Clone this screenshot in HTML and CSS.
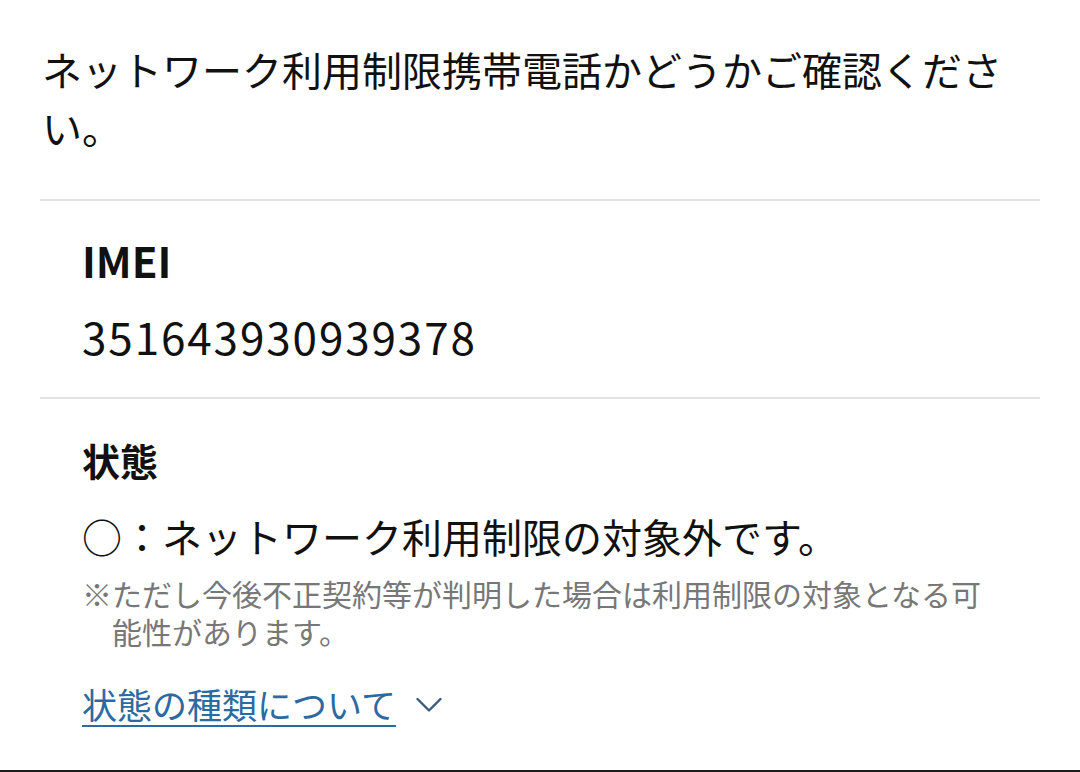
FILE: index.html
```html
<!DOCTYPE html>
<html lang="ja">
<head>
<meta charset="utf-8">
<link rel="stylesheet" href="styles.css">
</head>
<body>
<div class="page">
  <p class="intro">ネットワーク利用制限携帯電話かどうかご確認ください。</p>
  <section class="item item-imei">
    <h2 class="label label-latin">IMEI</h2>
    <p class="value digits">351643930939378</p>
  </section>
  <section class="item item-status">
    <h2 class="label">状態</h2>
    <p class="value">○：ネットワーク利用制限の対象外です。</p>
    <p class="note">※ただし今後不正契約等が判明した場合は利用制限の対象となる可能性があります。</p>
    <a class="toggle" href="#"><span class="toggle-text">状態の種類について</span><svg class="chev" width="26" height="16" viewBox="0 0 26 16"><polyline points="1.5,2 13,13.5 24.5,2" fill="none" stroke="#3d5b7c" stroke-width="2.4" stroke-linecap="round" stroke-linejoin="round"/></svg></a>
  </section>
</div>
</body>
</html>
```
FILE: styles.css
```css
html, body {
  margin: 0;
  padding: 0;
  background: #ffffff;
}
body {
  font-family: "Noto Sans CJK JP", "Noto Sans", sans-serif;
  color: #111111;
}
.page {
  box-sizing: border-box;
  height: 772px;
  padding: 0 40px;
  border-bottom: 2px solid #1c1c1c;
  display: flex;
  flex-direction: column;
}
.intro {
  margin: 0;
  padding: 40px 0 43px 2px;
  font-size: 40px;
  line-height: 58px;
  border-bottom: 2px solid #e3e3e3;
}
.item {
  padding: 0 42px;
  display: flex;
  flex-direction: column;
  align-items: flex-start;
}
.item-imei {
  padding-top: 34px;
  padding-bottom: 36px;
  border-bottom: 2px solid #e3e3e3;
}
.item-status {
  padding-top: 36px;
}
.label {
  margin: 0;
  font-size: 38px;
  line-height: 50px;
  font-weight: 700;
}
.label-latin {
  font-size: 42px;
  letter-spacing: 0;
}
.value {
  margin: 26px 0 0;
  font-size: 40px;
  line-height: 50px;
  font-weight: 400;
}
.digits {
  font-size: 44px;
  letter-spacing: 1.9px;
}
.note {
  margin: 13px 0 0;
  font-size: 30px;
  line-height: 38px;
  color: #777777;
  padding-left: 30px;
  text-indent: -30px;
}
.toggle {
  margin-top: 29px;
  display: flex;
  align-items: center;
  gap: 20px;
  font-size: 35px;
  line-height: 50px;
  color: #2b6aa3;
  text-decoration: none;
}
.toggle-text {
  text-decoration: underline;
  text-decoration-thickness: 2px;
  text-underline-offset: 6px;
}
.chev {
  display: block;
  margin-top: 2px;
}
```
